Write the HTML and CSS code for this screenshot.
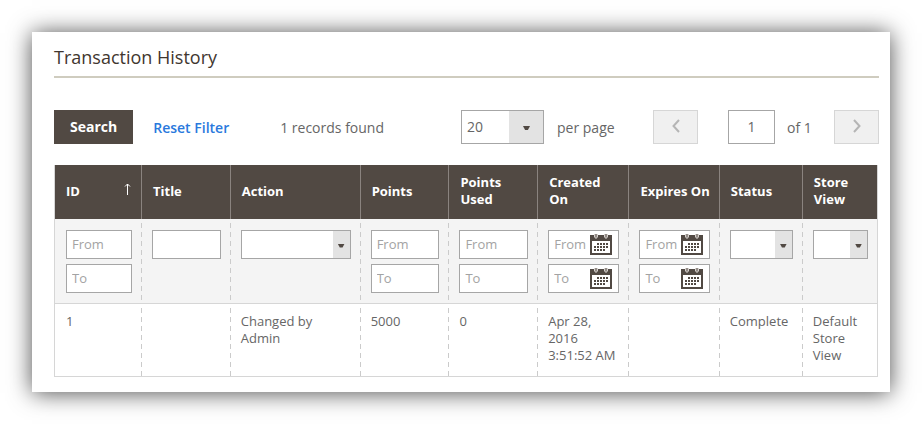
FILE: index.html
```html
<!DOCTYPE html>
<html lang="en">
<head>
<meta charset="utf-8">
<title>Transaction History</title>
<link rel="stylesheet" href="styles.css">
</head>
<body>
<svg width="0" height="0" class="sprite" aria-hidden="true">
  <symbol id="calendar" viewBox="0 0 22 21">
    <path d="M1 2h20v18H1z" fill="#fff" stroke="#514943" stroke-width="2"/>
    <path d="M0 1h22v6H0z" fill="#514943"/>
    <path d="M4 0h4v3L6 5 4 3zM14 0h4v3l-2 2-2-2z" fill="#d6d1cd"/>
    <path d="M5.500 0h1v3.500h-1zM15.500 0h1v3.500h-1z" fill="#514943"/>
    <path d="M7 10h12M4 13h15M4 16h12" stroke="#514943" stroke-width="2" stroke-dasharray="2 1"/>
  </symbol>
</svg>
<main class="card">
  <h1 class="title">Transaction History</h1>
  <form class="grid">
    <div class="toolbar">
      <button class="search" type="button">Search</button>
      <a class="reset" href="#">Reset Filter</a>
      <span class="found">1 records found</span>
      <div class="pager">
        <span class="select limit"><select id="limit"><option>20</option></select></span>
        <label class="per-page" for="limit">per page</label>
        <button class="step" type="button" aria-label="Previous page" disabled><svg width="8" height="14" viewBox="0 0 8 14"><path d="M7 1 1.500 7 7 13"/></svg></button>
        <input class="page" id="page" value="1">
        <label class="of" for="page">of 1</label>
        <button class="step" type="button" aria-label="Next page" disabled><svg width="8" height="14" viewBox="0 0 8 14"><path d="M1 1 6.500 7 1 13"/></svg></button>
      </div>
    </div>
    <table class="data">
      <colgroup>
        <col class="c-id"><col class="c-title"><col class="c-action"><col class="c-points"><col class="c-used"><col class="c-created"><col class="c-expires"><col class="c-status"><col class="c-store">
      </colgroup>
      <thead>
        <tr class="names">
          <th><span class="sorted">ID <svg width="7" height="13" viewBox="0 0 7 13"><path d="M3.500 12V1M1 3.500 3.500 1 6 3.500"/></svg></span></th>
          <th>Title</th><th>Action</th><th>Points</th><th>Points Used</th><th>Created On</th><th class="tight">Expires On</th><th>Status</th><th>Store View</th>
        </tr>
        <tr class="filters">
          <td><div class="range"><input aria-label="ID from" placeholder="From"><input aria-label="ID to" placeholder="To"></div></td>
          <td><input aria-label="Title"></td>
          <td><span class="select"><select aria-label="Action"><option></option></select></span></td>
          <td><div class="range"><input aria-label="Points from" placeholder="From"><input aria-label="Points to" placeholder="To"></div></td>
          <td><div class="range"><input aria-label="Points used from" placeholder="From"><input aria-label="Points used to" placeholder="To"></div></td>
          <td><div class="range">
            <span class="date"><input aria-label="Created from" placeholder="From"><svg class="cal"><use href="#calendar"/></svg></span>
            <span class="date"><input aria-label="Created to" placeholder="To"><svg class="cal"><use href="#calendar"/></svg></span>
          </div></td>
          <td><div class="range">
            <span class="date"><input aria-label="Expires from" placeholder="From"><svg class="cal"><use href="#calendar"/></svg></span>
            <span class="date"><input aria-label="Expires to" placeholder="To"><svg class="cal"><use href="#calendar"/></svg></span>
          </div></td>
          <td><span class="select"><select aria-label="Status"><option></option></select></span></td>
          <td><span class="select"><select aria-label="Store view"><option></option></select></span></td>
        </tr>
      </thead>
      <tbody>
        <tr class="row">
          <td>1</td><td></td><td>Changed by Admin</td><td>5000</td><td>0</td><td>Apr 28, 2016 3:51:52&nbsp;AM</td><td></td><td>Complete</td><td>Default Store View</td>
        </tr>
      </tbody>
    </table>
  </form>
</main>
</body>
</html>
```
FILE: styles.css
```css
* {
  box-sizing: border-box;
}

body {
  margin: 0;
  padding: 32px;
  background: #fff;
  color: #666;
  font: 13px/17px "Open Sans", "Noto Sans", sans-serif;
}

.sprite {
  position: absolute;
}

.card {
  padding: 13px 11px 15px 22px;
  background: #fff;
  box-shadow: 0 1px 22px rgba(0, 0, 0, 0.7);
}

.title {
  margin: 0 0 32px;
  padding-bottom: 7px;
  border-bottom: 2px solid #cfccbf;
  color: #41362f;
  font-size: 18px;
  font-weight: 500;
  line-height: 24px;
}

input,
select,
button {
  margin: 0;
  font: inherit;
  color: inherit;
}

input,
select {
  display: block;
  width: 100%;
  height: 29px;
  padding: 0 5px 2px;
  border: 1px solid #a6a6a6;
  border-radius: 0;
  background: #fff;
}

input::placeholder {
  color: #a3a3a3;
  opacity: 1;
}

.select {
  display: block;
  position: relative;
}

.select select {
  appearance: none;
  background: linear-gradient(#e3e3e3, #e3e3e3) right / 17px 100% no-repeat #fff;
}

.select::after {
  content: "";
  position: absolute;
  top: calc(50% - 1px);
  right: 6px;
  width: 7px;
  height: 4px;
  background: #514943;
  clip-path: polygon(0 0, 100% 0, 70% 100%, 30% 100%);
  pointer-events: none;
}

.toolbar {
  display: flex;
  align-items: center;
  margin-bottom: 21px;
  font-size: 14px;
}

.search {
  height: 34px;
  padding: 0 16px 2px;
  border: 0;
  background: #514943;
  color: #fff;
  font-weight: 700;
}

.reset {
  margin-left: 20px;
  color: #2a79dd;
  font-weight: 600;
  text-decoration: none;
}

.found {
  margin-left: 51px;
}

.pager {
  display: flex;
  align-items: center;
  margin-left: auto;
}

.limit {
  width: 83px;
}

.limit select {
  height: 34px;
  background-size: 34px 100%;
}

.limit::after {
  right: 14px;
}

.per-page {
  width: 109px;
  padding-left: 13px;
}

.page {
  width: 47px;
  height: 34px;
  margin-left: 30px;
  text-align: center;
}

.of {
  width: 59px;
  padding-left: 12px;
}

.step {
  display: grid;
  place-items: center;
  width: 45px;
  height: 34px;
  padding: 0 0 2px;
  border: 1px solid #d6d6d6;
  background: #f0f0f0;
}

.step svg {
  fill: none;
  stroke: #b5b5b5;
  stroke-width: 2;
}

.data {
  width: calc(100% - 1px);
  table-layout: fixed;
  border-spacing: 0;
  border: 1px solid #d6d6d6;
  border-top: 0;
}

.c-id { width: 86px; }
.c-title { width: 10.8%; }
.c-action { width: 15.8%; }
.c-points { width: 10.8%; }
.c-used { width: 10.8%; }
.c-created { width: 11.1%; }
.c-expires { width: 11%; }
.c-status { width: 10.1%; }

.data th,
.data td {
  padding: 10px 9px 10px 11px;
  text-align: left;
  vertical-align: top;
}

.data .names th {
  height: 54px;
  padding: 8px 6px 10px 11px;
  border-left: 1px solid #8a837f;
  background: #514943;
  color: #fff;
  font-weight: 700;
  vertical-align: middle;
}

.data .names th:first-child {
  border-left: 0;
}

.data .names th.tight {
  padding-right: 0;
  white-space: nowrap;
}

.sorted {
  display: flex;
  justify-content: space-between;
  align-items: center;
}

.sorted svg {
  margin: -4px 4px 0 0;
  fill: none;
  stroke: #fff;
}

.data td:not(:first-child) {
  background-image: repeating-linear-gradient(transparent 0 4px, #cbcbcb 4px 9px);
  background-size: 1px 100%;
  background-repeat: no-repeat;
}

.data .filters td {
  height: 85px;
  padding-top: 11px;
  padding-bottom: 9px;
  border-bottom: 1px solid #d6d6d6;
  background-color: #f4f4f4;
}

.range {
  display: grid;
  gap: 5px;
}

.date {
  position: relative;
}

.cal {
  position: absolute;
  top: 4px;
  right: 7px;
  width: 22px;
  height: 21px;
}

.data .row td {
  height: 72px;
  padding-top: 9px;
}

.data .row td:last-child {
  padding-right: 6px;
}
```
